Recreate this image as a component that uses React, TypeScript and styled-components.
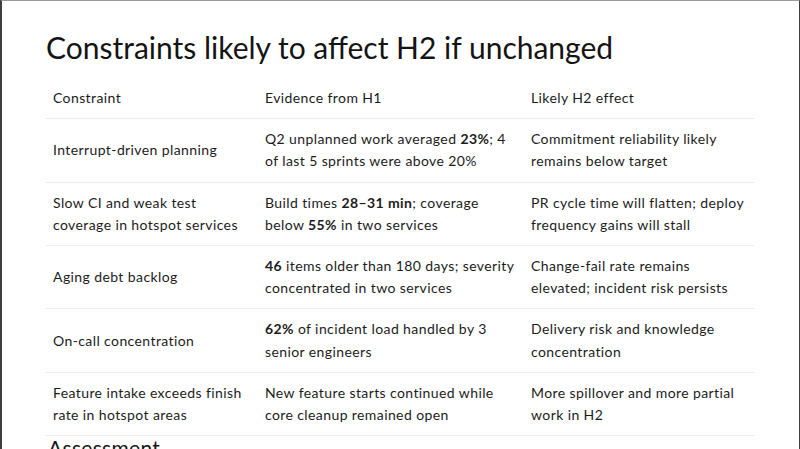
import React from "react";
import styled, { createGlobalStyle } from "styled-components";

const GlobalStyle = createGlobalStyle`
  html, body {
    margin: 0;
    padding: 0;
    background: #ffffff;
  }
  body {
    font-family: "Lato", "Liberation Sans", sans-serif;
    color: #1c1c1c;
  }
`;

type Row = {
  constraint: React.ReactNode;
  evidence: React.ReactNode;
  effect: React.ReactNode;
};

const rows: Row[] = [
  {
    constraint: "Interrupt-driven planning",
    evidence: (
      <>
        Q2 unplanned work averaged <b>23%</b>; 4 of last 5 sprints were above 20%
      </>
    ),
    effect: "Commitment reliability likely remains below target",
  },
  {
    constraint: "Slow CI and weak test coverage in hotspot services",
    evidence: (
      <>
        Build times <b>28–31 min</b>; coverage below <b>55%</b> in two services
      </>
    ),
    effect: "PR cycle time will flatten; deploy frequency gains will stall",
  },
  {
    constraint: "Aging debt backlog",
    evidence: (
      <>
        <b>46</b> items older than 180 days; severity concentrated in two services
      </>
    ),
    effect: "Change-fail rate remains elevated; incident risk persists",
  },
  {
    constraint: "On-call concentration",
    evidence: (
      <>
        <b>62%</b> of incident load handled by 3 senior engineers
      </>
    ),
    effect: "Delivery risk and knowledge concentration",
  },
  {
    constraint: "Feature intake exceeds finish rate in hotspot areas",
    evidence: "New feature starts continued while core cleanup remained open",
    effect: "More spillover and more partial work in H2",
  },
];

export default function App() {
  return (
    <>
      <GlobalStyle />
      <Slide>
        <Title>Constraints likely to affect H2 if unchanged</Title>
        <Table>
          <Cell>
            <span>Constraint</span>
          </Cell>
          <Cell>
            <span>Evidence from H1</span>
          </Cell>
          <Cell>
            <span>Likely H2 effect</span>
          </Cell>
          {rows.map((r, i) => (
            <React.Fragment key={i}>
              <Cell>
                <span>{r.constraint}</span>
              </Cell>
              <Cell>
                <span>{r.evidence}</span>
              </Cell>
              <Cell>
                <span>{r.effect}</span>
              </Cell>
            </React.Fragment>
          ))}
        </Table>
        <SectionHeading>Assessment</SectionHeading>
      </Slide>
    </>
  );
}

const Slide = styled.div`
  box-sizing: border-box;
  width: 800px;
  height: 449px;
  overflow: hidden;
  border-top: 1px solid #9a9a9a;
  border-left: 2px solid #3f3f3f;
  border-right: 1px solid #3f3f3f;
  padding: 28px 0 0 44px;
  background: #ffffff;
`;

const Title = styled.h1`
  margin: 0 0 13px;
  font-size: 30px;
  font-weight: 400;
  line-height: 36px;
  color: #141414;
`;

const Table = styled.div`
  display: grid;
  grid-template-columns: 212px 266px 230px;
  width: 708px;
`;

const Cell = styled.div`
  padding: 9px 7px;
  font-size: 14px;
  line-height: 22.2px;
  letter-spacing: 0.4px;
  border-bottom: 1px solid #ececec;
  display: flex;
  align-items: center;

  b {
    font-weight: 700;
  }
`;

const SectionHeading = styled.h2`
  margin: 0 0 0 2px;
  font-size: 21px;
  font-weight: 400;
  line-height: 24px;
  letter-spacing: 0.3px;
  color: #141414;
`;
